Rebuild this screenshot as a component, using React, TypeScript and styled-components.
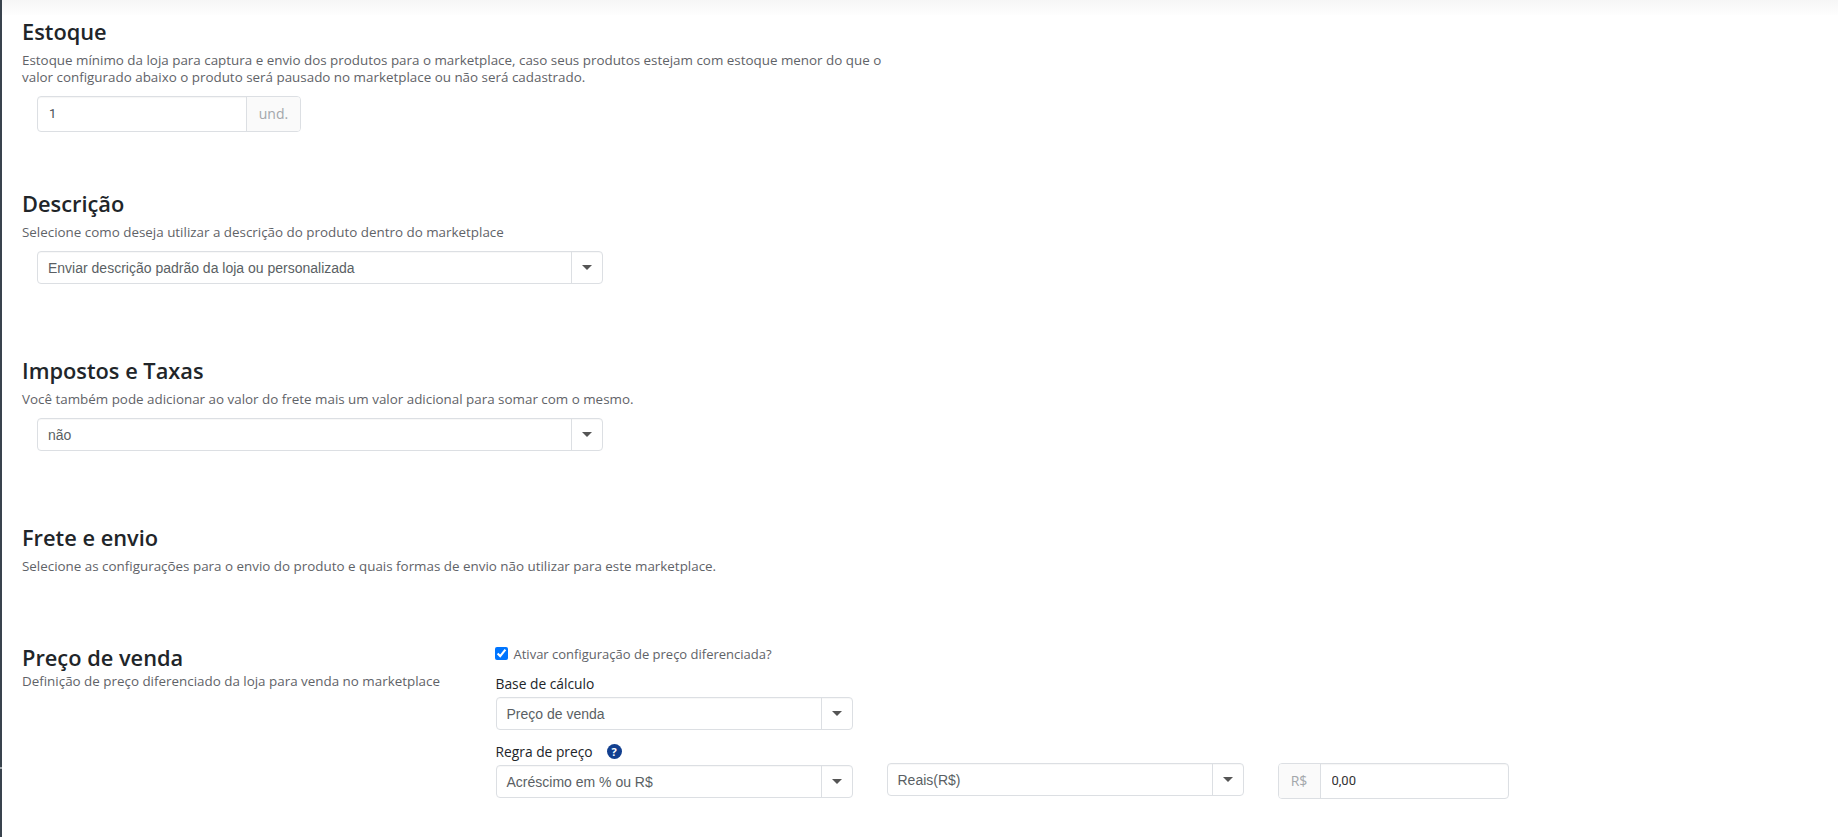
import styled, { createGlobalStyle } from "styled-components";

const GlobalStyle = createGlobalStyle`
  html, body {
    margin: 0;
    padding: 0;
    height: 837px;
    overflow: hidden;
    background: #fff;
    font-family: "Open Sans", sans-serif;
  }
`;

const Page = styled.div`
  position: relative;
  height: 837px;
  box-sizing: border-box;
  border-left: 2px solid #39434d;
  display: flex;
  flex-direction: column;

  /* small notch on the sidebar edge */
  &::before {
    content: "";
    position: absolute;
    left: -2px;
    top: 767px;
    width: 2px;
    height: 2px;
    background: #a5abb0;
  }
`;

const TopShade = styled.div`
  height: 15px;
  flex: none;
  background: linear-gradient(#f6f6f6, #fefefe);
`;

const Section = styled.section<{ $height: number }>`
  height: ${({ $height }) => $height}px;
  flex: none;
  box-sizing: border-box;
  padding-left: 20px;
`;

const Title = styled.h4`
  margin: 0;
  font-size: 21.8px;
  line-height: 34px;
  font-weight: 540;
  color: #212529;
`;

const Text = styled.p`
  margin: 3px 0 0;
  width: 885px;
  font-size: 13.4px;
  line-height: 17px;
  color: #5f6368;
`;

const FieldIndent = styled.div`
  margin: 10px 0 0 15px;
`;

const InputGroup = styled.div<{ $width: number }>`
  display: flex;
  width: ${({ $width }) => $width}px;
  height: 36px;
  box-sizing: border-box;
  border: 1px solid #dcdfe3;
  border-radius: 4px;
  overflow: hidden;
  box-shadow: inset 0 1px 1px rgba(0, 0, 0, 0.04);
`;

const Addon = styled.span<{ $side: "left" | "right"; $width: number }>`
  flex: none;
  width: ${({ $width }) => $width}px;
  box-sizing: border-box;
  padding-bottom: 2px;
  display: flex;
  align-items: center;
  justify-content: center;
  background: #fafafa;
  color: #a3a7ab;
  font-size: 14px;
  border-${({ $side }) => ($side === "left" ? "left" : "right")}: 1px solid #dcdfe3;
`;

const TextInput = styled.input<{ $dark?: boolean }>`
  flex: 1;
  min-width: 0;
  border: 0;
  outline: 0;
  padding: 0 0 2px 11px;
  background: transparent;
  font-family: "Roboto", sans-serif;
  font-size: 13px;
  color: ${({ $dark }) => ($dark ? "#333" : "#495057")};
`;

const Select = styled.div<{ $width: number }>`
  display: flex;
  align-items: stretch;
  width: ${({ $width }) => $width}px;
  height: 33px;
  box-sizing: border-box;
  border: 1px solid #dcdfe3;
  border-radius: 4px;
  box-shadow: inset 0 1px 1px rgba(0, 0, 0, 0.03);
`;

const SelectValue = styled.span`
  flex: 1;
  display: flex;
  align-items: center;
  padding-left: 10px;
  font-family: "Liberation Sans", Arial, sans-serif;
  font-size: 14px;
  color: #5a5f64;
`;

const Arrow = styled.span`
  flex: none;
  width: 30px;
  display: flex;
  align-items: center;
  justify-content: center;
  border-left: 1px solid #dcdfe3;

  &::after {
    content: "";
    border-style: solid;
    border-width: 5px 5px 0;
    border-color: #555 transparent transparent;
    margin-top: -1px;
  }
`;

const PriceSection = styled.section`
  display: grid;
  grid-template-columns: 473.5px 391px 391px 1fr;
  padding-left: 20px;
`;

const PriceIntro = styled.div``;

const PriceText = styled(Text)`
  margin: -2px 0 0;
`;

const PriceForm = styled.div`
  display: flex;
  flex-direction: column;
  padding-top: 4px;
`;

const CheckRow = styled.label`
  display: flex;
  align-items: center;
  gap: 6px;
  height: 17px;
  margin-left: -1px;
  font-size: 13px;
  color: #5f6368;
`;

const Check = styled.input`
  width: 13px;
  height: 13px;
  margin: 0;
`;

const FieldLabel = styled.label`
  display: flex;
  align-items: center;
  gap: 14px;
  height: 20px;
  margin: 11.5px 0 3.5px;
  font-size: 13.8px;
  font-weight: 510;
  color: #212529;
`;

const HelpBadge = styled.span`
  width: 15px;
  height: 15px;
  border-radius: 50%;
  background: #123f8f;
  color: #fff;
  font-size: 11px;
  font-weight: 700;
  display: flex;
  align-items: center;
  justify-content: center;
`;

const BottomCell = styled.div`
  align-self: end;
  margin-bottom: 2px;
`;

const BottomInputCell = styled.div`
  align-self: end;
  margin-bottom: -1px;
`;

export default function App() {
  return (
    <Page>
      <GlobalStyle />
      <TopShade />
      <Section $height={172}>
        <Title>Estoque</Title>
        <Text>
          Estoque mínimo da loja para captura e envio dos produtos para o marketplace, caso seus produtos estejam com
          estoque menor do que o valor configurado abaixo o produto será pausado no marketplace ou não será cadastrado.
        </Text>
        <FieldIndent>
          <InputGroup $width={264}>
            <TextInput defaultValue="1" />
            <Addon $side="left" $width={54}>und.</Addon>
          </InputGroup>
        </FieldIndent>
      </Section>
      <Section $height={167}>
        <Title>Descrição</Title>
        <Text>Selecione como deseja utilizar a descrição do produto dentro do marketplace</Text>
        <FieldIndent>
          <Select $width={565.5}>
            <SelectValue>Enviar descrição padrão da loja ou personalizada</SelectValue>
            <Arrow />
          </Select>
        </FieldIndent>
      </Section>
      <Section $height={167}>
        <Title>Impostos e Taxas</Title>
        <Text>Você também pode adicionar ao valor do frete mais um valor adicional para somar com o mesmo.</Text>
        <FieldIndent>
          <Select $width={565.5}>
            <SelectValue>não</SelectValue>
            <Arrow />
          </Select>
        </FieldIndent>
      </Section>
      <Section $height={120}>
        <Title>Frete e envio</Title>
        <Text>Selecione as configurações para o envio do produto e quais formas de envio não utilizar para este marketplace.</Text>
      </Section>
      <PriceSection>
        <PriceIntro>
          <Title>Preço de venda</Title>
          <PriceText>Definição de preço diferenciado da loja para venda no marketplace</PriceText>
        </PriceIntro>
        <PriceForm>
          <CheckRow>
            <Check type="checkbox" defaultChecked />
            Ativar configuração de preço diferenciada?
          </CheckRow>
          <FieldLabel>Base de cálculo</FieldLabel>
          <Select $width={357.5}>
            <SelectValue>Preço de venda</SelectValue>
            <Arrow />
          </Select>
          <FieldLabel>
            Regra de preço
            <HelpBadge>?</HelpBadge>
          </FieldLabel>
          <Select $width={357.5}>
            <SelectValue>Acréscimo em % ou R$</SelectValue>
            <Arrow />
          </Select>
        </PriceForm>
        <BottomCell>
          <Select $width={357}>
            <SelectValue>Reais(R$)</SelectValue>
            <Arrow />
          </Select>
        </BottomCell>
        <BottomInputCell>
          <InputGroup $width={231}>
            <Addon $side="right" $width={42}>R$</Addon>
            <TextInput $dark defaultValue="0,00" />
          </InputGroup>
        </BottomInputCell>
      </PriceSection>
    </Page>
  );
}
